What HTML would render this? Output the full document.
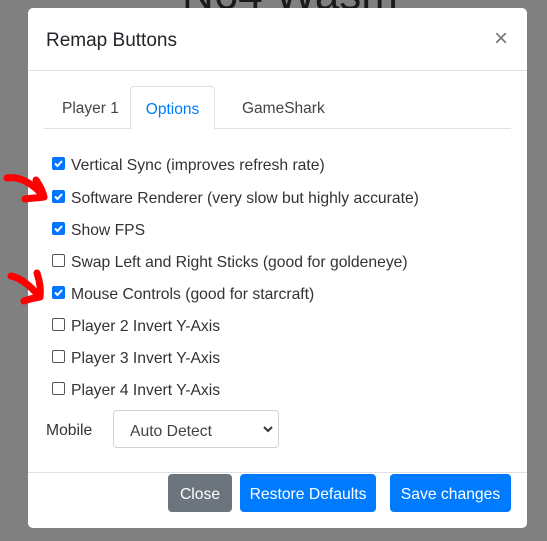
<!DOCTYPE html>
<html><head><meta charset="utf-8"><style>
body{margin:0;width:547px;height:541px;background:#808080;position:relative;overflow:hidden;font-family:"Liberation Sans",sans-serif;color:#212529}
.bg{position:absolute;left:182px;top:-30px;font-size:44px;color:#1a1a1a;white-space:nowrap}
.modal{position:absolute;left:28px;top:8px;width:499px;height:520px;background:#fff;border-radius:5px}
.hdr{position:absolute;left:0;top:0;width:499px;height:62px;border-bottom:1px solid #dee2e6}
.title{position:absolute;left:18px;top:22px;font-size:19px}
.x{position:absolute;left:466px;top:17px;font-size:24px;color:#777}
.nav{position:absolute;left:16px;top:120px;width:467px;border-bottom:1px solid #dee2e6}
.tab{position:absolute;top:-42px;height:41px;line-height:46px;font-size:15.5px;color:#444}
.act{border:1px solid #dee2e6;border-bottom:1px solid #fff;border-radius:4px 4px 0 0;color:#007bff;background:#fff;height:42px}
.row{position:absolute;left:24px;font-size:15.7px;color:#333;height:20px;line-height:20px}
.cb{position:absolute;left:0;top:2px;width:13px;height:13px;border-radius:2px}
.cb svg{display:block}
.on{background:#0075ff}
.off{border:1px solid #555;width:11px;height:11px;background:#fff}
.row span{position:absolute;left:19px;top:1px;white-space:nowrap}
.sel{position:absolute;left:85px;top:402px;width:164px;height:36px;border:1px solid #ced4da;border-radius:4px;font-size:15.7px;line-height:41px;color:#444}
.ftr{position:absolute;left:0;top:464px;width:499px;border-top:1px solid #dee2e6}
.btn{position:absolute;top:466px;height:38px;line-height:41px;color:#fff;font-size:15.7px;text-align:center;border-radius:4px;background:#007bff;white-space:nowrap}
</style></head><body>
<div class="bg">N64 Wasm</div>
<div class="modal">
<div class="hdr"><div class="title">Remap Buttons</div><div class="x">×</div></div>
<div class="nav">
<div class="tab" style="left:18px">Player 1</div>
<div class="tab act" style="left:86px;width:83px;text-align:center">Options</div>
<div class="tab" style="left:198px">GameShark</div>
</div>
<div class="row" style="top:147px"><div class="cb on"><svg width="13" height="13"><path d="M3 6.5l2.5 2.5 4.5-5" stroke="#fff" stroke-width="2" fill="none"/></svg></div><span>Vertical Sync (improves refresh rate)</span></div>
<div class="row" style="top:180px"><div class="cb on"><svg width="13" height="13"><path d="M3 6.5l2.5 2.5 4.5-5" stroke="#fff" stroke-width="2" fill="none"/></svg></div><span>Software Renderer (very slow but highly accurate)</span></div>
<div class="row" style="top:212px"><div class="cb on"><svg width="13" height="13"><path d="M3 6.5l2.5 2.5 4.5-5" stroke="#fff" stroke-width="2" fill="none"/></svg></div><span>Show FPS</span></div>
<div class="row" style="top:244px"><div class="cb off"></div><span>Swap Left and Right Sticks (good for goldeneye)</span></div>
<div class="row" style="top:276px"><div class="cb on"><svg width="13" height="13"><path d="M3 6.5l2.5 2.5 4.5-5" stroke="#fff" stroke-width="2" fill="none"/></svg></div><span>Mouse Controls (good for starcraft)</span></div>
<div class="row" style="top:308px"><div class="cb off"></div><span>Player 2 Invert Y-Axis</span></div>
<div class="row" style="top:340px"><div class="cb off"></div><span>Player 3 Invert Y-Axis</span></div>
<div class="row" style="top:372px"><div class="cb off"></div><span>Player 4 Invert Y-Axis</span></div>
<div class="row" style="left:18px;top:413px">Mobile</div>
<div class="sel"><span style="position:absolute;left:16px">Auto Detect</span><svg style="position:absolute;left:149px;top:15px" width="10" height="7"><path d="M1 1l4 4 4-4" stroke="#333" stroke-width="2" fill="none"/></svg></div>
<div class="ftr"></div>
<div class="btn" style="left:140px;width:64px;background:#6c757d">Close</div>
<div class="btn" style="left:212px;width:136px">Restore Defaults</div>
<div class="btn" style="left:362px;width:121px">Save changes</div>
</div>
<svg style="position:absolute;left:0;top:0" width="60" height="320">
<g stroke="#f00" stroke-width="7" fill="none" stroke-linecap="round" stroke-linejoin="round">
<path d="M7 178 C20 176 34 184 44 197"/><path d="M36 180 C40 186 43 192 44 197 C38 198 31 198 25 199"/>
<path d="M11 276 C22 278 32 288 40 297"/><path d="M37 273 C40 282 41 290 40 297 C34 298 29 299 24 301"/>
</g></svg>
</body></html>
